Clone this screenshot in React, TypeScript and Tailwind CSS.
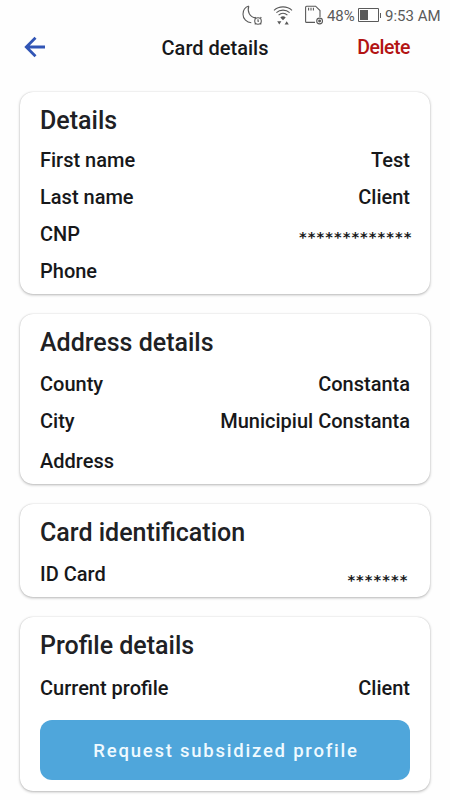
import type { ReactNode } from "react";

function StatusBar() {
  return (
    <div className="flex h-[30px] items-center pl-[242px] font-normal text-[#5a5a5a]">
      <svg width="22" height="22" viewBox="0 0 22 22" fill="none" stroke="currentColor" strokeWidth="1.1">
        <path d="M6.8 2C3 3.2 1 6.5 1 10.2C1 15 4.8 18.6 9.3 18.7M6.8 2C5 7.6 7.6 13.3 13.8 13.9" />
        <circle cx="16" cy="17" r="3.3" />
        <path d="M16 15.2V17.3H17M12.6 14.2L13.6 13.2M19.4 14.2L18.4 13.2M13.6 19.4L12.8 20.4M18.4 19.4L19.2 20.4" />
      </svg>
      <svg className="ml-[9px]" width="20" height="22" viewBox="0 0 20 22" fill="none" stroke="currentColor" strokeWidth="1.1">
        <path d="M1 6.3C6 1.7 14 1.7 19 6.3M3.4 8.7C7 5.3 13 5.3 16.6 8.7M5.6 11.2C8.2 8.7 11.8 8.7 14.4 11.2" />
        <path d="M7.3 13.4C9 12 11 12 12.7 13.4L10 16.2ZM4.2 17.2H8.4L6.3 20.4ZM11.6 20.4H15.8L13.7 17.2Z" fill="currentColor" stroke="none" />
      </svg>
      <svg className="ml-[12px]" width="19" height="22" viewBox="0 0 19 22" fill="none" stroke="currentColor" strokeWidth="1.1">
        <path d="M10 18.4H1.6Q.6 18.4 .6 17.4V3.2Q.6 2.2 1.6 2.2H10.6L15 6.6V13M3.6 3.8V6.6M6 3.8V6.6M8.4 3.8V6.6" />
        <circle cx="14.6" cy="17" r="2.9" />
        <circle cx="14.6" cy="17" r=".9" fill="currentColor" />
      </svg>
      <span className="ml-[3px] w-[30px] pt-[2px] text-[15px] leading-none tracking-[-0.1px] whitespace-nowrap">48%</span>
      <svg className="ml-px" width="24" height="16" viewBox="0 0 24 16" fill="none" stroke="currentColor">
        <path d="M.5 1.5H20.5V14.5H.5ZM22.5 6V11" />
        <path d="M2 3H10V13H2Z" fill="currentColor" stroke="none" />
      </svg>
      <span className="ml-[3px] pt-[2px] text-[15px] leading-none whitespace-nowrap">9:53 AM</span>
    </div>
  );
}

function Card({ title, className, children }: { title: string; className: string; children: ReactNode }) {
  return (
    <section
      className={`flex flex-col rounded-[13px] bg-white px-5 pt-2 shadow-[0_1px_3px_rgba(0,0,0,0.28),0_0_1px_rgba(0,0,0,0.2)] ${className}`}
    >
      <h2 className="h-[41px] text-[25px] leading-[41px] text-[#202124]">{title}</h2>
      {children}
    </section>
  );
}

function Row({ label, children }: { label: string; children?: ReactNode }) {
  return (
    <div className="flex h-[37px] items-center justify-between text-[20px]">
      <span>{label}</span>
      {children}
    </div>
  );
}

function Masked({ length, className }: { length: number; className: string }) {
  return (
    <span className={`font-['DejaVu_Sans_Mono',monospace] text-[14.5px] leading-none font-bold ${className}`}>
      {"*".repeat(length)}
    </span>
  );
}

export default function App() {
  return (
    <div className="h-[800px] w-[450px] overflow-hidden bg-[#fefefe] font-['Roboto',sans-serif] font-medium text-[#17181a]">
      <StatusBar />

      <header className="grid h-[35px] grid-cols-3 items-center pr-10 pl-6">
        <button aria-label="Back" className="-mt-0.5 w-[22px]">
          <svg width="22" height="22" viewBox="0 0 22 22" fill="none" stroke="#3155b5" strokeWidth="2.8">
            <path d="M21 11H2.5M11.5 1.8L2.3 11L11.5 20.2" />
          </svg>
        </button>
        <h1 className="ml-[-4px] text-center text-[20px] whitespace-nowrap">Card details</h1>
        <button className="pt-px text-right text-[19.5px] tracking-[-0.45px] text-[#b31414]">Delete</button>
      </header>

      <main className="flex flex-col gap-5 px-5 pt-[27px]">
        <Card title="Details" className="h-[202px]">
          <div>
            <Row label="First name">
              <span>Test</span>
            </Row>
            <Row label="Last name">
              <span>Client</span>
            </Row>
            <Row label="CNP">
              <Masked length={13} className="-mr-0.5 pt-[7px]" />
            </Row>
            <Row label="Phone" />
          </div>
        </Card>

        <Card title="Address details" className="h-[170px]">
          <div className="mt-0.5">
            <Row label="County">
              <span>Constanta</span>
            </Row>
            <Row label="City">
              <span>Municipiul Constanta</span>
            </Row>
            <div className="mt-[3px]">
              <Row label="Address" />
            </div>
          </div>
        </Card>

        <Card title="Card identification" className="h-[93px]">
          <div className="mt-0.5">
            <Row label="ID Card">
              <Masked length={7} className="mr-0.5 pt-[13px]" />
            </Row>
          </div>
        </Card>

        <Card title="Profile details" className="h-[174px]">
          <div className="mt-[3px]">
            <Row label="Current profile">
              <span>Client</span>
            </Row>
          </div>
          <button className="mt-3.5 h-[60px] rounded-[12px] bg-[#4fa6db] pt-[3px] pl-0.5 text-[18.5px] tracking-[1.77px] text-[#effaff]">
            Request subsidized profile
          </button>
        </Card>
      </main>
    </div>
  );
}
